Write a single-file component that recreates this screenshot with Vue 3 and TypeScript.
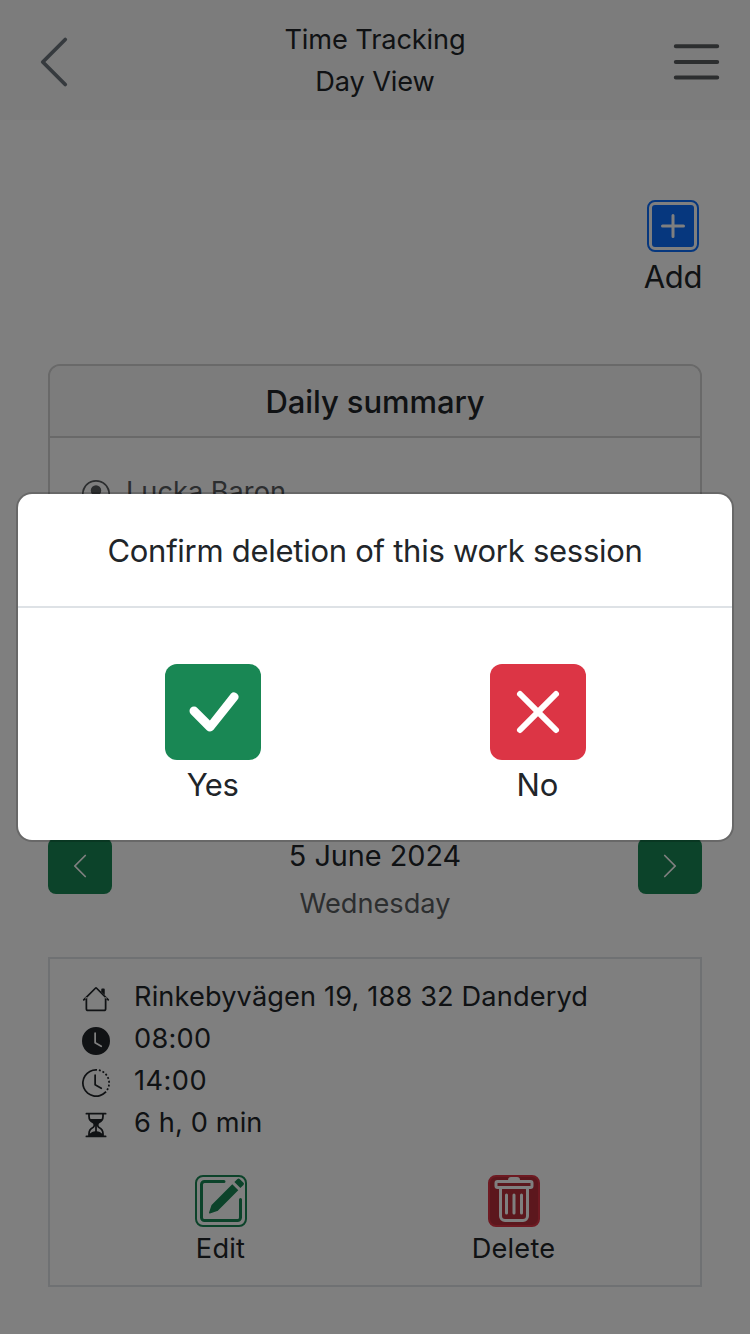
<script setup lang="ts">
interface SessionRow {
  icon: string
  text: string
  cls: string
}

const icons: Record<string, string> = {
  house:
    'M2 13.5V7h1v6.5a.5.5 0 0 0 .5.5h9a.5.5 0 0 0 .5-.5V7h1v6.5a1.5 1.5 0 0 1-1.5 1.5h-9A1.5 1.5 0 0 1 2 13.5zm11-11V6l-2-2V2.5a.5.5 0 0 1 .5-.5h1a.5.5 0 0 1 .5.5zM7.293 1.5a1 1 0 0 1 1.414 0l6.647 6.646a.5.5 0 0 1-.708.708L8 2.207 1.354 8.854a.5.5 0 1 1-.708-.708z',
  clockFill:
    'M16 8A8 8 0 1 1 0 8a8 8 0 0 1 16 0M8 3.5a.5.5 0 0 0-1 0V9a.5.5 0 0 0 .252.434l3.5 2a.5.5 0 0 0 .496-.868L8 8.71z',
  clockHistory:
    'M8.515 1.019A7 7 0 0 0 8 1V0a8 8 0 0 1 .589.022zm2.004.45a7 7 0 0 0-.985-.299l.219-.976q.576.129 1.126.342zm1.37.71a7 7 0 0 0-.439-.27l.493-.87a8 8 0 0 1 .979.654l-.615.789a7 7 0 0 0-.418-.302zm1.834 1.79a7 7 0 0 0-.653-.796l.724-.69q.406.429.747.91zm.744 1.352a7 7 0 0 0-.214-.468l.893-.45a8 8 0 0 1 .45 1.088l-.95.313a7 7 0 0 0-.179-.483m.53 2.507a7 7 0 0 0-.1-1.025l.985-.17q.1.58.116 1.17zm-.131 1.538q.05-.254.081-.51l.993.123a8 8 0 0 1-.23 1.155l-.964-.267q.069-.247.12-.501m-.952 2.379q.276-.436.486-.908l.914.405q-.24.54-.555 1.038zm-.964 1.205q.183-.183.35-.378l.758.653a8 8 0 0 1-.401.432zM8 1a7 7 0 1 0 4.95 11.95l.707.707A8.001 8.001 0 1 1 8 0zM7.5 3a.5.5 0 0 1 .5.5v5.21l3.248 1.856a.5.5 0 0 1-.496.868l-3.5-2A.5.5 0 0 1 7 9V3.5a.5.5 0 0 1 .5-.5',
  hourglass:
    'M2.5 15a.5.5 0 1 1 0-1h1v-1a4.5 4.5 0 0 1 2.557-4.06c.29-.139.443-.377.443-.59v-.7c0-.213-.154-.451-.443-.59A4.5 4.5 0 0 1 3.5 3V2h-1a.5.5 0 0 1 0-1h11a.5.5 0 0 1 0 1h-1v1a4.5 4.5 0 0 1-2.557 4.06c-.29.139-.443.377-.443.59v.7c0 .213.154.451.443.59A4.5 4.5 0 0 1 12.5 13v1h1a.5.5 0 0 1 0 1zm2-13v1c0 .537.12 1.045.337 1.5h6.326c.216-.455.337-.963.337-1.5V2zm3 6.35c0 .701-.478 1.236-1.011 1.492A3.5 3.5 0 0 0 4.5 13s.866-1.299 3-1.48zm1 0v3.17c2.134.181 3 1.48 3 1.48a3.5 3.5 0 0 0-1.989-3.158C8.978 9.586 8.5 9.052 8.5 8.351z',
  person:
    'M11 6a3 3 0 1 1-6 0 3 3 0 0 1 6 0M0 8a8 8 0 1 1 16 0A8 8 0 0 1 0 8m8-7a7 7 0 0 0-5.468 11.37C3.242 11.226 4.805 10 8 10s4.757 1.225 5.468 2.37A7 7 0 0 0 8 1',
  chevronLeft:
    'M11.354 1.646a.5.5 0 0 1 0 .708L5.707 8l5.647 5.646a.5.5 0 0 1-.708.708l-6-6a.5.5 0 0 1 0-.708l6-6a.5.5 0 0 1 .708 0',
  chevronRight:
    'M4.646 1.646a.5.5 0 0 1 .708 0l6 6a.5.5 0 0 1 0 .708l-6 6a.5.5 0 0 1-.708-.708L10.293 8 4.646 2.354a.5.5 0 0 1 0-.708',
  pencil:
    'M15.502 1.94a.5.5 0 0 1 0 .706L14.459 3.69l-2-2L13.502.646a.5.5 0 0 1 .707 0l1.293 1.293zm-1.75 2.456-2-2L4.939 9.21a.5.5 0 0 0-.121.196l-.805 2.414a.25.25 0 0 0 .316.316l2.414-.805a.5.5 0 0 0 .196-.12l6.813-6.814zM1 13.5A1.5 1.5 0 0 0 2.5 15h11a1.5 1.5 0 0 0 1.5-1.5v-6a.5.5 0 0 0-1 0v6a.5.5 0 0 1-.5.5h-11a.5.5 0 0 1-.5-.5v-11a.5.5 0 0 1 .5-.5H9a.5.5 0 0 0 0-1H2.5A1.5 1.5 0 0 0 1 2.5z',
  trash:
    'M5.5 5.5A.5.5 0 0 1 6 6v6a.5.5 0 0 1-1 0V6a.5.5 0 0 1 .5-.5m2.5 0a.5.5 0 0 1 .5.5v6a.5.5 0 0 1-1 0V6a.5.5 0 0 1 .5-.5m3 .5a.5.5 0 0 0-1 0v6a.5.5 0 0 0 1 0zM14.5 3a1 1 0 0 1-1 1H13v9a2 2 0 0 1-2 2H5a2 2 0 0 1-2-2V4h-.5a1 1 0 0 1-1-1V2a1 1 0 0 1 1-1H6a1 1 0 0 1 1-1h2a1 1 0 0 1 1 1h3.5a1 1 0 0 1 1 1zM4.118 4 4 4.059V13a1 1 0 0 0 1 1h6a1 1 0 0 0 1-1V4.059L11.882 4zM2.5 3h11V2h-11z',
  check:
    'M10.97 4.97a.75.75 0 0 1 1.07 1.05l-3.99 4.99a.75.75 0 0 1-1.08.02L4.324 8.384a.75.75 0 1 1 1.06-1.06l2.094 2.093 3.473-4.425z',
  cross:
    'M4.646 4.646a.5.5 0 0 1 .708 0L8 7.293l2.646-2.647a.5.5 0 0 1 .708.708L8.707 8l2.647 2.646a.5.5 0 0 1-.708.708L8 8.707l-2.646 2.647a.5.5 0 0 1-.708-.708L7.293 8 4.646 5.354a.5.5 0 0 1 0-.708',
  plus: 'M8 4a.5.5 0 0 1 .5.5v3h3a.5.5 0 0 1 0 1h-3v3a.5.5 0 0 1-1 0v-3h-3a.5.5 0 0 1 0-1h3v-3A.5.5 0 0 1 8 4',
}

const rows: SessionRow[] = [
  { icon: 'house', text: 'Rinkebyvägen 19, 188 32 Danderyd', cls: 'address' },
  { icon: 'clockFill', text: '08:00', cls: 'start' },
  { icon: 'clockHistory', text: '14:00', cls: 'end' },
  { icon: 'hourglass', text: '6 h, 0 min', cls: 'duration' },
]
</script>

<template>
  <div class="screen">
    <header class="topbar">
      <svg class="back" viewBox="0 0 16 16"><path :d="icons.chevronLeft" /></svg>
      <div class="title">
        <div>Time Tracking</div>
        <div>Day View</div>
      </div>
      <svg class="menu" viewBox="0 0 60 60">
        <path d="M9.8 14.3h41.4M9.8 30h41.4M9.8 45.5h41.4" />
      </svg>
    </header>

    <main class="content">
      <div class="add">
        <button class="icon-btn add-btn">
          <span class="add-fill">
            <svg viewBox="0 0 16 16"><path :d="icons.plus" /></svg>
          </span>
        </button>
        <span class="big">Add</span>
      </div>

      <section class="card">
        <h5 class="card-header">Daily summary</h5>
        <div class="card-body">
          <svg viewBox="0 0 16 16"><path :d="icons.person" /></svg>
          <span>Lucka Baron</span>
        </div>
      </section>

      <nav class="day-nav">
        <button class="nav-btn">
          <svg viewBox="0 0 16 16"><path :d="icons.chevronLeft" /></svg>
        </button>
        <div class="day">
          <div class="date">5 June 2024</div>
          <div class="weekday">Wednesday</div>
        </div>
        <button class="nav-btn">
          <svg viewBox="0 0 16 16"><path :d="icons.chevronRight" /></svg>
        </button>
      </nav>

      <section class="session">
        <div v-for="row in rows" :key="row.icon" class="row">
          <svg viewBox="0 0 16 16"><path fill-rule="evenodd" :d="icons[row.icon]" /></svg>
          <span :class="row.cls">{{ row.text }}</span>
        </div>
        <div class="actions">
          <div class="action">
            <button class="icon-btn edit-btn">
              <svg viewBox="0 0 16 16"><path :d="icons.pencil" /></svg>
            </button>
            <span class="action-label">Edit</span>
          </div>
          <div class="action">
            <button class="icon-btn delete-btn">
              <svg viewBox="0 0 16 16"><path :d="icons.trash" /></svg>
            </button>
            <span class="action-label">Delete</span>
          </div>
        </div>
      </section>
    </main>

    <div class="backdrop">
      <div class="modal" role="dialog">
        <div class="modal-header">Confirm deletion of this work session</div>
        <div class="modal-body">
          <div class="choice">
            <button class="choice-btn yes">
              <svg viewBox="0 0 16 16"><path :d="icons.check" /></svg>
            </button>
            <span class="yes-label">Yes</span>
          </div>
          <div class="choice">
            <button class="choice-btn no">
              <svg viewBox="0 0 16 16"><path :d="icons.cross" /></svg>
            </button>
            <span>No</span>
          </div>
        </div>
      </div>
    </div>
  </div>
</template>

<style scoped>
.screen {
  position: relative;
  width: 750px;
  height: 1334px;
  overflow: hidden;
  background: #fff;
  color: #212529;
  font-family: Inter, "Liberation Sans", sans-serif;
  font-size: 27.2px;
  line-height: 42px;
  white-space: nowrap;
}
svg {
  display: block;
  flex: none;
  fill: currentColor;
}
button {
  box-sizing: border-box;
  margin: 0;
  padding: 0;
  border: 0;
  display: flex;
  align-items: center;
  justify-content: center;
}
.topbar {
  box-sizing: border-box;
  height: 120px;
  padding: 19px 24px 0;
  display: flex;
  justify-content: space-between;
  background: #f8f8f8;
}
.title {
  text-align: center;
  letter-spacing: -0.12px;
}
.back {
  width: 60px;
  height: 60px;
  margin-top: 13px;
  color: #6c757d;
}
.menu {
  width: 60px;
  height: 60px;
  margin-top: 13px;
  fill: none;
  stroke: #595c5f;
  stroke-width: 4;
  stroke-linecap: round;
}
.content {
  padding: 80px 48px 0;
}
.add {
  width: 58px;
  margin-left: auto;
  display: flex;
  flex-direction: column;
  align-items: center;
}
.big {
  font-size: 31px;
  line-height: 49px;
  letter-spacing: -0.3px;
}
.icon-btn {
  width: 52px;
  height: 52px;
  border: 2px solid;
  border-radius: 8px;
  background: transparent;
}
.icon-btn svg {
  width: 48px;
  height: 48px;
}
.add-btn {
  border-color: #0d6efd;
}
.add-fill {
  width: 42px;
  height: 42px;
  border-radius: 3px;
  background: #0d6efd;
  color: #fff;
  display: flex;
  align-items: center;
  justify-content: center;
}
.card {
  box-sizing: border-box;
  height: 436px;
  margin-top: 63px;
  border: 2px solid #d2d2d2;
  border-radius: 12px;
}
.card-header {
  margin: 0;
  height: 70px;
  border-bottom: 2px solid #d2d2d2;
  border-radius: 10px 10px 0 0;
  background: #f8f8f8;
  text-align: center;
  font-size: 31px;
  font-weight: 500;
  line-height: 71px;
  letter-spacing: -0.08px;
}
.card-body {
  display: flex;
  padding: 33px 32px;
  gap: 16px;
  color: #595c5f;
}
.card-body svg {
  width: 28px;
  height: 28px;
  margin-top: 9px;
}
.day-nav {
  margin-top: 32px;
  display: flex;
  justify-content: space-between;
  line-height: 48px;
  text-align: center;
}
.date {
  font-size: 28.8px;
}
.weekday {
  line-height: 47px;
  color: #595c5f;
}
.nav-btn {
  width: 64px;
  height: 56px;
  margin-top: 6px;
  border-radius: 8px;
  background: #198754;
  color: #fff;
}
.nav-btn svg {
  width: 28px;
  height: 28px;
}
.session {
  box-sizing: border-box;
  height: 330px;
  margin-top: 30px;
  padding: 17px 32px 0;
  border: 2px solid #dee2e6;
}
.row {
  display: flex;
  gap: 24px;
}
.row svg {
  width: 28px;
  height: 28px;
  margin-top: 9px;
}
.address {
  letter-spacing: 0.13px;
}
.start {
  letter-spacing: 0.25px;
}
.end {
  letter-spacing: 0.45px;
}
.duration {
  letter-spacing: 0.12px;
}
.actions {
  display: flex;
  margin: 31px 8px 0 -8px;
}
.action {
  width: 50%;
  display: flex;
  flex-direction: column;
  align-items: center;
}
.action-label {
  line-height: 44px;
  letter-spacing: 0.2px;
}
.edit-btn {
  color: #198754;
  border-color: #198754;
}
.delete-btn {
  color: #fff;
  background: #b92f3a;
  border-color: #dc3545;
}
.backdrop {
  position: absolute;
  inset: 0;
  display: flex;
  align-items: center;
  justify-content: center;
  background: rgba(0, 0, 0, 0.5);
}
.modal {
  box-sizing: border-box;
  width: 718px;
  height: 350px;
  border: 2px solid rgba(0, 0, 0, 0.175);
  border-radius: 16px;
  background: #fff;
  background-clip: padding-box;
  font-size: 31px;
}
.modal-header {
  height: 112px;
  border-bottom: 2px solid #dee2e6;
  text-align: center;
  line-height: 114px;
  letter-spacing: -0.27px;
}
.modal-body {
  display: flex;
  padding: 56px 32px 0;
}
.choice {
  width: 50%;
  display: flex;
  flex-direction: column;
  align-items: center;
  line-height: 50px;
}
.yes-label {
  letter-spacing: -0.5px;
}
.choice-btn {
  width: 96px;
  height: 96px;
  border-radius: 12px;
  color: #fff;
}
.choice-btn svg {
  width: 96px;
  height: 96px;
}
.yes {
  background: #198754;
}
.no {
  background: #dc3545;
}
</style>
